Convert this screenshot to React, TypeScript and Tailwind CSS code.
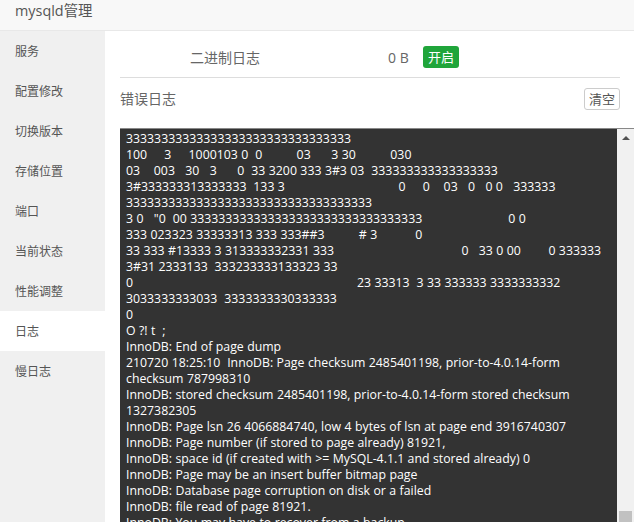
const menu = ['服务', '配置修改', '切换版本', '存储位置', '端口', '当前状态', '性能调整', '日志', '慢日志'];

const logText = `33333333333333333333333333333333
100     3     1000103 0  0          03      3 30          030
03    003   30   3      0  33 3200 333 3#3 03  333333333333333333
3#333333313333333  133 3                                 0     0    03   0   0 0   333333
33333333333333333333333333333333333
3 0   "0  00 333333333333333333333333333333333                         0 0
333 023323 33333313 333 333##3          # 3           0
33 333 #13333 3 313333332331 333                                     0   33 0 00        0 333333
3#31 2333133  333233333133323 33
0                                                                 23 33313  3 33 333333 3333333332
3033333333033  3333333330333333
0
O ?! t  ;
InnoDB: End of page dump
210720 18:25:10  InnoDB: Page checksum 2485401198, prior-to-4.0.14-form checksum 787998310
InnoDB: stored checksum 2485401198, prior-to-4.0.14-form stored checksum 1327382305
InnoDB: Page lsn 26 4066884740, low 4 bytes of lsn at page end 3916740307
InnoDB: Page number (if stored to page already) 81921,
InnoDB: space id (if created with >= MySQL-4.1.1 and stored already) 0
InnoDB: Page may be an insert buffer bitmap page
InnoDB: Database page corruption on disk or a failed
InnoDB: file read of page 81921.
InnoDB: You may have to recover from a backup.`;

export default function App() {
  return (
    <div className="h-[522px] overflow-hidden bg-white text-[12px] text-[#555] font-['Open_Sans','Noto_Sans_CJK_SC',sans-serif]">
      <div className="h-[31px] border-b border-[#e8e8e8] bg-[#f8f8f8] pl-[15px] text-[14.4px] leading-[21px]">
        mysqld管理
      </div>
      <div className="flex">
        <div className="w-[105px] h-[491px] shrink-0 bg-[#f0f0f0]">
          {menu.map((item) => (
            <div
              key={item}
              className={`h-10 pl-[15px] leading-[42px] ${item === '日志' ? 'bg-white' : ''}`}
            >
              {item}
            </div>
          ))}
        </div>
        <div className="flex-1 min-w-0 pl-[15px]">
          <div className="flex h-[47px] pt-[6px] items-center w-[500px] border-b border-[#ddd] text-[14px] text-[#666]">
            <span className="ml-[70px] w-[198px]">二进制日志</span>
            <span className="w-[35px]">0 B</span>
            <span className="rounded-[3px] bg-[#20a53a] px-[5px] text-[13px] leading-[22px] text-white">开启</span>
          </div>
          <div className="flex h-[50px] pb-[9px] items-center justify-between w-[500px] text-[14px] text-[#666]">
            <span>错误日志</span>
            <button className="h-[22px] rounded-[3px] border border-[#ccc] bg-white px-[4px] text-[13px] leading-[20px] text-[#555]">清空</button>
          </div>
          <div className="relative h-[400px] w-[514px] overflow-hidden border-t border-[#888] bg-[#333]">
            <pre className="w-[497px] pl-[6px] pr-[6px] pt-[2px] whitespace-pre-wrap text-[12.3px] leading-4 [word-spacing:0.25px] text-white font-['Open_Sans',sans-serif]">
              {logText}
            </pre>
            <div className="absolute right-0 top-0 bottom-0 w-[17px] bg-[#f1f1f1]">
              <div className="mx-auto mt-[7px] h-0 w-0 border-x-[4px] border-b-[4px] border-x-transparent border-b-[#505050]" />
              <div className="absolute left-[2px] right-[2px] top-[382px] h-[20px] bg-[#c1c1c1]" />
            </div>
          </div>
        </div>
      </div>
    </div>
  );
}
